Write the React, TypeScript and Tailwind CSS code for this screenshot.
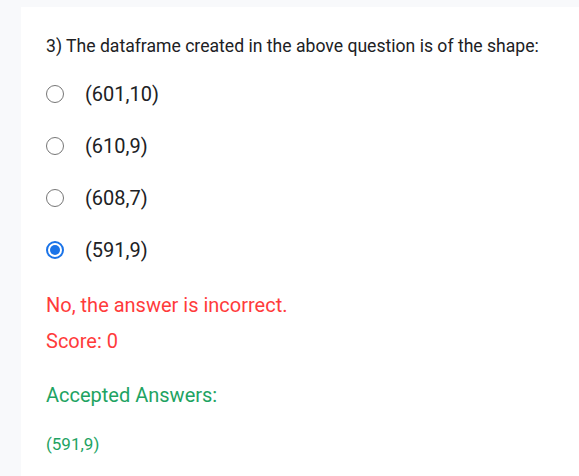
import React from "react";

const options = ["(601,10)", "(610,9)", "(608,7)", "(591,9)"];

function Radio({ checked }: { checked: boolean }) {
  if (checked) {
    return (
      <span className="flex h-[18px] w-[18px] items-center justify-center rounded-full border-2 border-[#1a73e8]">
        <span className="h-[10px] w-[10px] rounded-full bg-[#1a73e8]" />
      </span>
    );
  }
  return <span className="h-[18px] w-[18px] rounded-full border-[1.5px] border-[#767676]" />;
}

export default function App() {
  return (
    <div className="min-h-[476px] bg-[#f8f9fb] pl-[21px] pt-[7px]" style={{ fontFamily: "Roboto, sans-serif" }}>
      <div className="min-h-[469px] bg-white pl-[25px] pt-[27px] text-[#202124]">
        <div className="text-[17.6px] leading-[24px]">3) The dataframe created in the above question is of the shape:</div>
        <div className="mt-[24px] flex flex-col gap-[28px]">
          {options.map((o, i) => (
            <div key={o} className="flex h-[24px] items-center">
              <span className="flex w-[39px] items-center">
                <Radio checked={i === 3} />
              </span>
              <span className="text-[20px] leading-[24px]">{o}</span>
            </div>
          ))}
        </div>
        <div className="mt-[31px] text-[20px] leading-[24px] text-[#ff3b3b]">No, the answer is incorrect.</div>
        <div className="mt-[12px] text-[20px] leading-[24px] text-[#ff3b3b]">Score: 0</div>
        <div className="mt-[30px] text-[20px] leading-[24px] text-[#1ea362]">Accepted Answers:</div>
        <div className="mt-[25px] text-[17px] leading-[24px] text-[#1ea362]">(591,9)</div>
      </div>
    </div>
  );
}
